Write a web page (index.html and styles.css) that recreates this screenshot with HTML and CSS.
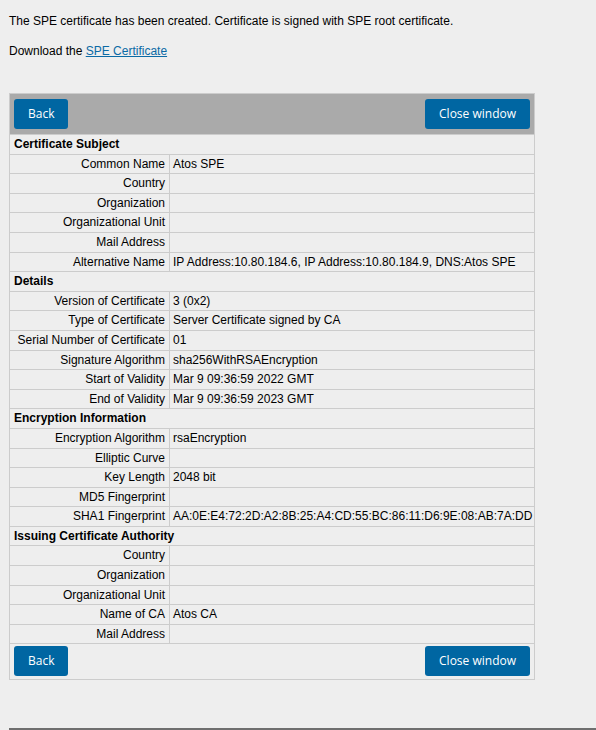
FILE: index.html
```html
<!DOCTYPE html>
<html>
<head>
<meta charset="utf-8">
<title>SPE Certificate</title>
<link rel="stylesheet" href="styles.css">
</head>
<body>
<div class="page">
  <p class="msg">The SPE certificate has been created. Certificate is signed with SPE root certificate.</p>
  <p class="msg download">Download the <a href="#" class="link">SPE Certificate</a></p>

  <table class="cert">
    <colgroup>
      <col class="col-label">
      <col class="col-value">
    </colgroup>
    <tr class="bar bar-top">
      <td colspan="2">
        <div class="toolbar">
          <button class="btn">Back</button>
          <button class="btn">Close window</button>
        </div>
      </td>
    </tr>
    <tr class="section"><td colspan="2">Certificate Subject</td></tr>
    <tr><td class="label">Common Name</td><td class="value">Atos SPE</td></tr>
    <tr><td class="label">Country</td><td class="value"></td></tr>
    <tr><td class="label">Organization</td><td class="value"></td></tr>
    <tr><td class="label">Organizational Unit</td><td class="value"></td></tr>
    <tr><td class="label">Mail Address</td><td class="value"></td></tr>
    <tr><td class="label">Alternative Name</td><td class="value">IP Address:10.80.184.6, IP Address:10.80.184.9, DNS:Atos SPE</td></tr>
    <tr class="section"><td colspan="2">Details</td></tr>
    <tr><td class="label">Version of Certificate</td><td class="value">3 (0x2)</td></tr>
    <tr><td class="label">Type of Certificate</td><td class="value">Server Certificate signed by CA</td></tr>
    <tr><td class="label">Serial Number of Certificate</td><td class="value">01</td></tr>
    <tr><td class="label">Signature Algorithm</td><td class="value">sha256WithRSAEncryption</td></tr>
    <tr><td class="label">Start of Validity</td><td class="value">Mar 9 09:36:59 2022 GMT</td></tr>
    <tr><td class="label">End of Validity</td><td class="value">Mar 9 09:36:59 2023 GMT</td></tr>
    <tr class="section"><td colspan="2">Encryption Information</td></tr>
    <tr><td class="label">Encryption Algorithm</td><td class="value">rsaEncryption</td></tr>
    <tr><td class="label">Elliptic Curve</td><td class="value"></td></tr>
    <tr><td class="label">Key Length</td><td class="value">2048 bit</td></tr>
    <tr><td class="label">MD5 Fingerprint</td><td class="value"></td></tr>
    <tr><td class="label">SHA1 Fingerprint</td><td class="value">AA:0E:E4:72:2D:A2:8B:25:A4:CD:55:BC:86:11:D6:9E:08:AB:7A:DD</td></tr>
    <tr class="section"><td colspan="2">Issuing Certificate Authority</td></tr>
    <tr><td class="label">Country</td><td class="value"></td></tr>
    <tr><td class="label">Organization</td><td class="value"></td></tr>
    <tr><td class="label">Organizational Unit</td><td class="value"></td></tr>
    <tr><td class="label">Name of CA</td><td class="value">Atos CA</td></tr>
    <tr><td class="label">Mail Address</td><td class="value"></td></tr>
    <tr class="bar bar-bottom">
      <td colspan="2">
        <div class="toolbar">
          <button class="btn">Back</button>
          <button class="btn">Close window</button>
        </div>
      </td>
    </tr>
  </table>

  <div class="rule"></div>
</div>
</body>
</html>
```

FILE: styles.css
```css
html, body {
  margin: 0;
  padding: 0;
  background: #eeeeee;
}

body {
  font-family: "Liberation Sans", Arial, sans-serif;
  font-size: 12px;
  color: #000;
  overflow: hidden;
}

.page {
  padding: 14px 0 0 9px;
}

.msg {
  margin: 0;
  line-height: 14px;
}

.download {
  margin-top: 16px;
}

.link {
  color: #0b6aa5;
  text-decoration: underline;
}

.cert {
  margin-top: 35px;
  width: 526px;
  border-collapse: collapse;
  border: 1px solid #cccccc;
  table-layout: fixed;
}

.col-label {
  width: 160px;
}

.cert td {
  border: 1px solid #cccccc;
  padding: 0 4px;
  height: 18.6px;
  line-height: 18.6px;
  white-space: nowrap;
  vertical-align: middle;
  overflow: hidden;
}

.cert td.label {
  text-align: right;
}

.cert td.value {
  text-align: left;
  padding-left: 3px;
  padding-right: 2px;
}

.section td {
  font-weight: bold;
}

.bar td {
  padding: 0;
  height: auto;
  line-height: normal;
}

.bar-top td {
  background: #aaaaaa;
}

.bar-top .toolbar {
  padding: 5px 4px 5px 4px;
}

.bar-bottom .toolbar {
  padding: 2px 4px 3px 4px;
}

.toolbar {
  display: flex;
  justify-content: space-between;
  align-items: center;
}

.btn {
  font-family: "Open Sans", "Segoe UI", sans-serif;
  font-size: 12px;
  color: #ffffff;
  background: #0066a2;
  border: 0;
  border-radius: 3px;
  height: 30px;
  padding: 0 14px;
  margin: 0;
  line-height: 30px;
  cursor: pointer;
}

.rule {
  margin-top: 48px;
  border-top: 2px solid #6e6e6e;
  margin-right: -20px;
}
```
